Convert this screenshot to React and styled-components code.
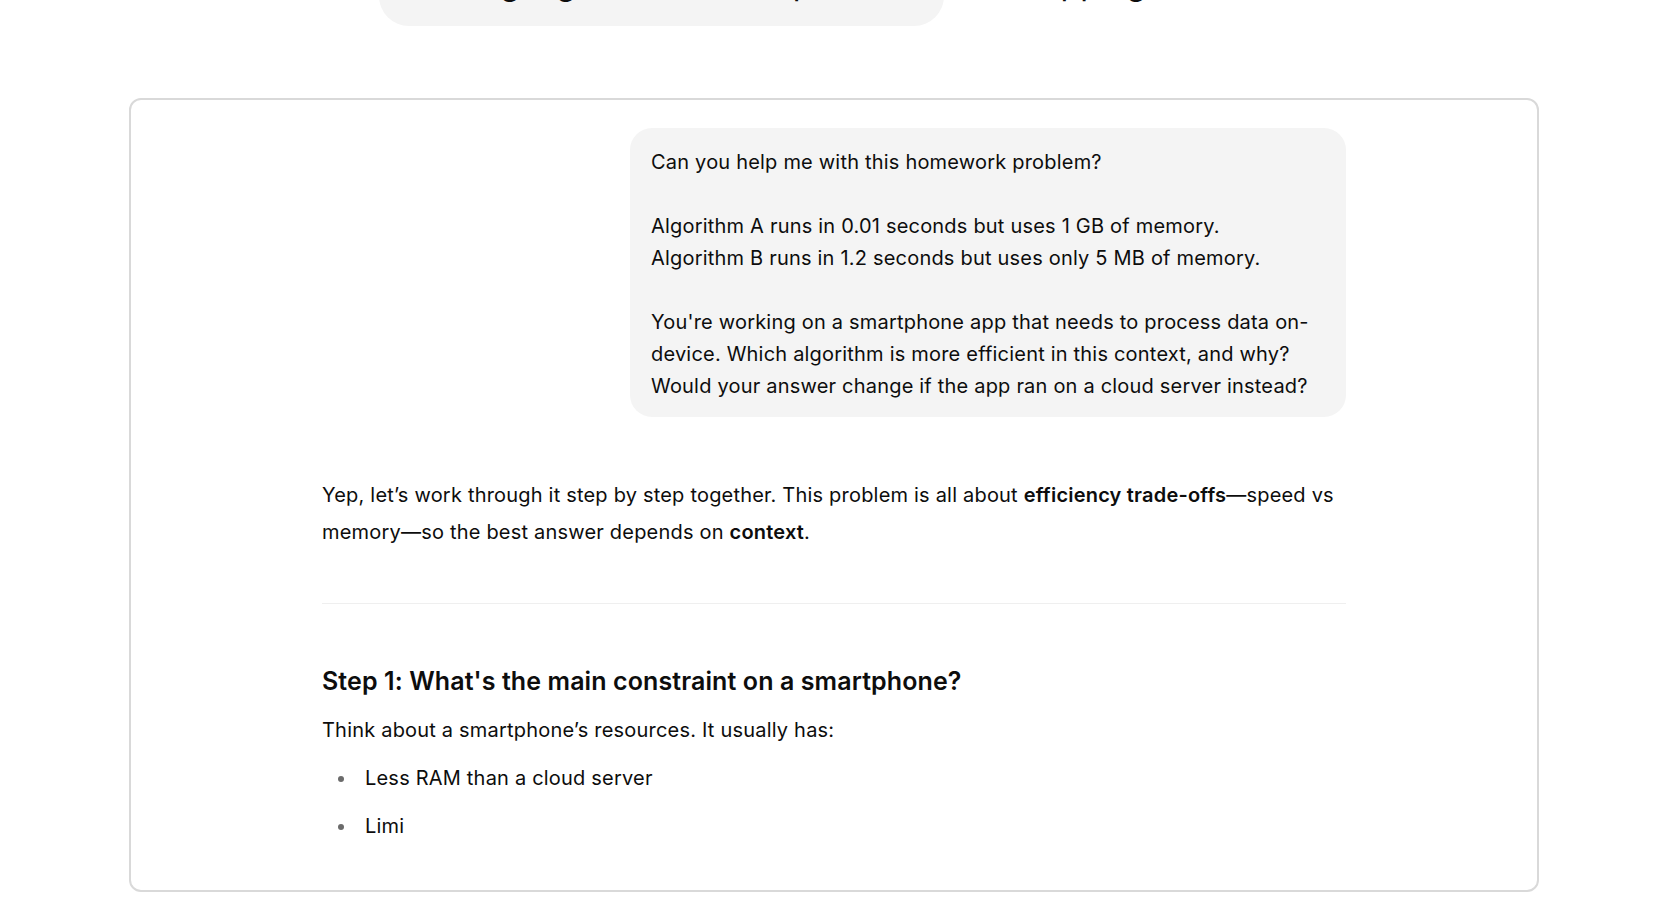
import styled, { createGlobalStyle } from "styled-components";

const Global = createGlobalStyle`
  body {
    margin: 0;
    background: #ffffff;
    color: #0d0d0d;
    font-family: Inter, "Noto Sans", "Liberation Sans", sans-serif;
    overflow: hidden;
  }
`;

const Page = styled.div`
  width: 1672px;
  height: 924px;
  overflow: hidden;
`;

const Headline = styled.div`
  display: flex;
  align-items: baseline;
  gap: 10px;
  margin-top: -44px;
  padding-left: 379px;
  font-size: 32px;
  line-height: 40px;
  white-space: nowrap;
`;

const Highlight = styled.span`
  background: #f4f4f4;
  border-radius: 0 0 30px 30px;
  padding: 8px 26px 22px;
`;

const Card = styled.div`
  width: 1410px;
  box-sizing: border-box;
  margin: 72px 0 0 129px;
  border: 2px solid #d9d9d9;
  border-radius: 12px;
  padding: 28px 0 45px;
`;

const Column = styled.div`
  width: 1024px;
  margin: 0 auto;
  display: flex;
  flex-direction: column;
  letter-spacing: 0.2px;
`;

const UserBubble = styled.div`
  align-self: flex-end;
  width: 716px;
  box-sizing: border-box;
  background: #f4f4f4;
  border-radius: 22px;
  padding: 18px 21px 15px;
  font-size: 20px;
  line-height: 32px;
  white-space: pre-line;
`;

const Paragraph = styled.p`
  margin: ${(p) => p.$top || 0}px 0 0;
  font-size: 20px;
  line-height: 37px;

  b {
    font-weight: 600;
  }
`;

const Divider = styled.hr`
  margin: 52px 0 0;
  border: 0;
  border-top: 1px solid #efefef;
`;

const StepTitle = styled.h3`
  margin: 61px 0 0;
  font-size: 25px;
  line-height: 32px;
  font-weight: 600;
  letter-spacing: 0.1px;
`;

const List = styled.ul`
  list-style: none;
  margin: 0;
  padding: 0;
`;

const Item = styled.li`
  display: flex;
  align-items: center;
  gap: 21px;
  margin-top: 11px;
  padding-left: 16px;
  font-size: 20px;
  line-height: 37px;
`;

const Dot = styled.span`
  width: 6px;
  height: 6px;
  border-radius: 50%;
  background: #6b6b6b;
  flex: none;
`;

const question = `Can you help me with this homework problem?

Algorithm A runs in 0.01 seconds but uses 1 GB of memory.
Algorithm B runs in 1.2 seconds but uses only 5 MB of memory.

You're working on a smartphone app that needs to process data on-device. Which algorithm is more efficient in this context, and why? Would your answer change if the app ran on a cloud server instead?`;

export default function App() {
  const bullets = ["Less RAM than a cloud server", "Limi"];

  return (
    <Page>
      <Global />
      <Headline>
        <Highlight>Turning big ideas into simple form</Highlight>
        <span>for shopping</span>
      </Headline>
      <Card>
        <Column>
          <UserBubble>{question}</UserBubble>
          <Paragraph $top={60}>
            Yep, let’s work through it step by step together. This problem is all about{" "}
            <b>efficiency trade-offs</b>—speed vs memory—so the best answer depends on{" "}
            <b>context</b>.
          </Paragraph>
          <Divider />
          <StepTitle>Step 1: What's the main constraint on a smartphone?</StepTitle>
          <Paragraph $top={15}>Think about a smartphone’s resources. It usually has:</Paragraph>
          <List>
            {bullets.map((text, i) => (
              <Item key={i}>
                <Dot />
                {text}
              </Item>
            ))}
          </List>
        </Column>
      </Card>
    </Page>
  );
}
